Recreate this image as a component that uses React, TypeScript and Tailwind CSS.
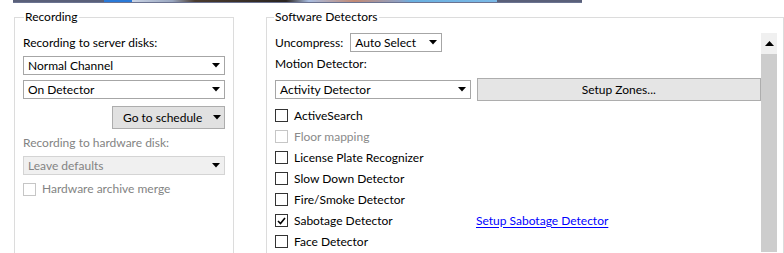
import type { ReactNode } from "react";

const FONT = "font-['Lato','Liberation_Sans',sans-serif] text-[12px] leading-[16px]";

function Arrow({ className = "" }: { className?: string }) {
  return (
    <svg width="8" height="5" viewBox="0 0 8 5" className={className}>
      <path d="M0 0H8L4 4.5Z" fill="#000" />
    </svg>
  );
}

function Select({
  value,
  width,
  disabled = false,
}: {
  value: string;
  width: string;
  disabled?: boolean;
}) {
  return (
    <div
      className={`${width} h-[19px] flex items-center justify-between pl-[4px] pr-[4px] border ${
        disabled
          ? "bg-[#f0f0f0] border-[#d4d4d4] text-[#838383]"
          : "bg-white border-[#a6a6a6] text-black"
      }`}
    >
      <span>{value}</span>
      <Arrow />
    </div>
  );
}

function Check({
  label,
  checked = false,
  disabled = false,
  children,
}: {
  label: string;
  checked?: boolean;
  disabled?: boolean;
  children?: ReactNode;
}) {
  return (
    <div className="flex items-center h-[21px]">
      <div className="w-[201px] flex items-center gap-[6px]">
        <span
          className={`w-[13px] h-[13px] border flex items-center justify-center bg-white ${
            disabled ? "border-[#c6c6c6]" : "border-[#333]"
          }`}
        >
          {checked && (
            <svg width="9" height="8" viewBox="0 0 9 8">
              <path d="M1 4L3.5 6.5L8 1" stroke="#000" strokeWidth="1.6" fill="none" />
            </svg>
          )}
        </span>
        <span className={disabled ? "text-[#8a8a8a]" : "text-black"}>{label}</span>
      </div>
      {children}
    </div>
  );
}

export default function App() {
  return (
    <div className={`w-[784px] h-[253px] bg-white overflow-hidden ${FONT}`}>
      {/* thumbnails strip peeking from above */}
      <div className="ml-[13px] w-[569px] h-[3px] border-b border-[#6b7391] bg-[linear-gradient(90deg,#5a6079_0%,#5a6079_16%,#2a7ad8_16%,#2a7ad8_21%,#c9d3e4_21%,#9aa7c0_28%,#4a3b2e_32%,#2a2420_48%,#a9bde0_52%,#c38a74_60%,#8ea1c4_68%,#6ab0e0_70%,#7bb9e6_85%,#5a6079_85%,#5a6079_100%)]" />

      <div className="flex mt-[6px]">
        {/* Recording */}
        <fieldset className="ml-[14px] w-[222px] h-[300px] border border-[#dcdcdc] px-[8px]">
          <legend className="ml-[1px] px-[1px] text-black">Recording</legend>
          <div className="flex flex-col">
            <div className="mt-[10px]">Recording to server disks:</div>
            <div className="mt-[5px]">
              <Select value="Normal Channel" width="w-[202px]" />
            </div>
            <div className="mt-[5px]">
              <Select value="On Detector" width="w-[202px]" />
            </div>
            <div className="mt-[7px] flex justify-end">
              <button className="w-[113px] h-[23px] bg-[#e1e1e1] border border-[#adadad] flex items-center justify-between pl-[10px] pr-[3px]">
                <span>Go to schedule</span>
                <Arrow />
              </button>
            </div>
            <div className="mt-[6px] text-[#838383]">Recording to hardware disk:</div>
            <div className="mt-[5px]">
              <Select value="Leave defaults" width="w-[202px]" disabled />
            </div>
            <div className="mt-[6px] flex items-center gap-[6px]">
              <span className="w-[13px] h-[13px] border border-[#c6c6c6] bg-white" />
              <span className="text-[#838383]">Hardware archive merge</span>
            </div>
          </div>
        </fieldset>

        {/* Software Detectors */}
        <fieldset className="ml-[32px] w-[560px] h-[300px] border border-[#dcdcdc] pl-[8px]">
          <legend className="-ml-[1px] px-[1px] text-black">Software Detectors</legend>
          <div className="mt-[8px] flex">
            <div className="w-[486px] flex flex-col">
              <div className="flex items-center h-[19px] gap-[7px]">
                <span>Uncompress:</span>
                <Select value="Auto Select" width="w-[92px]" />
              </div>
              <div className="mt-[4px]">Motion Detector:</div>
              <div className="mt-[6px] flex items-center gap-[6px] h-[23px]">
                <Select value="Activity Detector" width="w-[196px]" />
                <button className="w-[285px] h-[23px] bg-[#e5e5e5] border border-[#adadad]">
                  Setup Zones...
                </button>
              </div>
              <div className="mt-[4px] flex flex-col">
                <Check label="ActiveSearch" />
                <Check label="Floor mapping" disabled />
                <Check label="License Plate Recognizer" />
                <Check label="Slow Down Detector" />
                <Check label="Fire/Smoke Detector" />
                <Check label="Sabotage Detector" checked>
                  <a className="text-[#0000ff] underline underline-offset-[2px]" href="#">
                    Setup Sabotage Detector
                  </a>
                </Check>
                <Check label="Face Detector" />
              </div>
            </div>
            {/* scrollbar */}
            <div className="w-[16px] flex flex-col">
              <div className="h-[21px] bg-[#f0f0f0] flex items-center justify-center">
                <svg width="9" height="5" viewBox="0 0 9 5">
                  <path d="M0 5H9L4.5 0Z" fill="#000" />
                </svg>
              </div>
              <div className="flex-1 bg-[#cdcdcd]" />
            </div>
          </div>
        </fieldset>
      </div>
    </div>
  );
}
